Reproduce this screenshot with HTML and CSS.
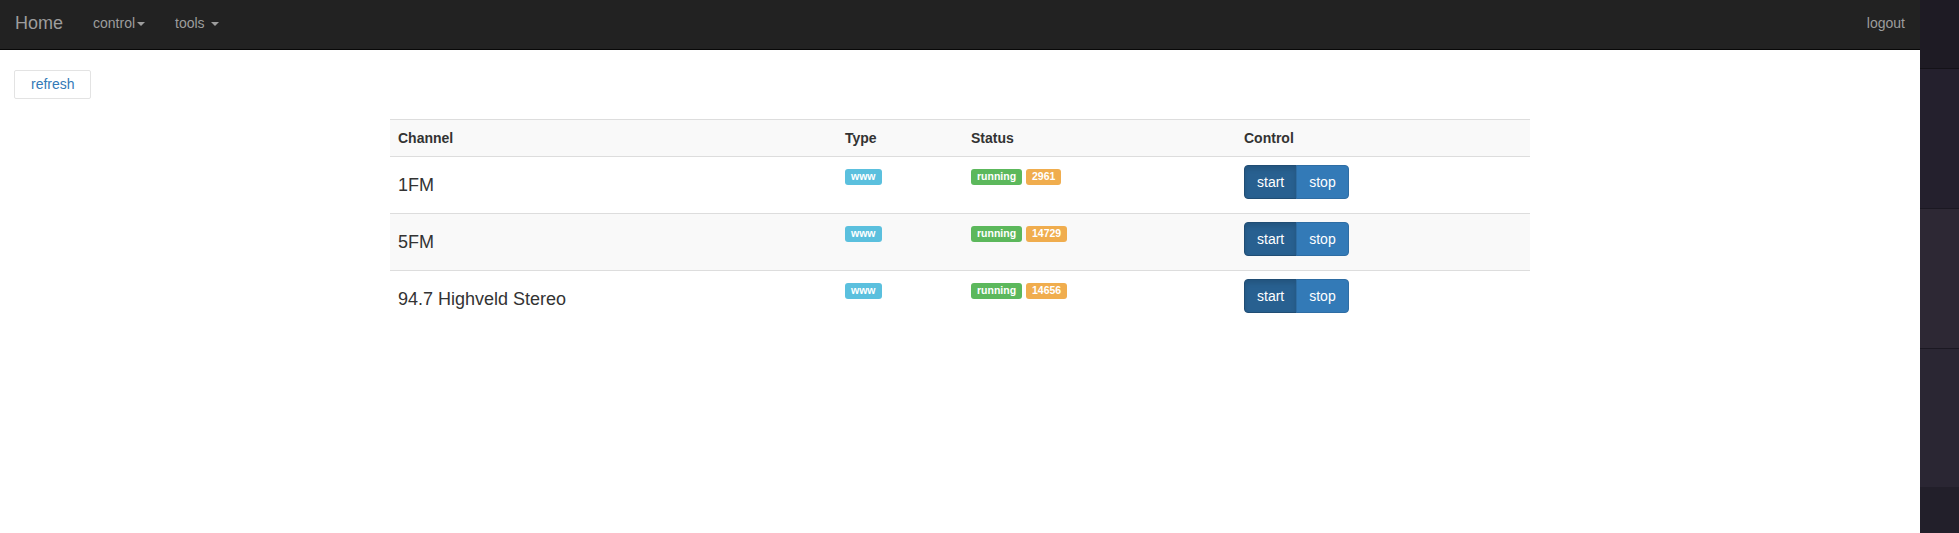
FILE: index.html
```html
<!DOCTYPE html>
<html>
<head>
<meta charset="utf-8">
<title>Channels</title>
<link rel="stylesheet" href="styles.css">
</head>
<body>
<div class="screen">
  <div class="page">
    <nav class="navbar">
      <a class="brand">Home</a>
      <a class="nav-link">control<span class="caret"></span></a>
      <a class="nav-link">tools <span class="caret"></span></a>
      <a class="nav-link nav-right">logout</a>
    </nav>
    <div class="toolbar">
      <button class="btn-refresh">refresh</button>
    </div>
    <div class="container">
      <table class="channels">
        <thead>
          <tr>
            <th class="col-channel">Channel</th>
            <th class="col-type">Type</th>
            <th class="col-status">Status</th>
            <th class="col-control">Control</th>
          </tr>
        </thead>
        <tbody>
          <tr>
            <td><h4 class="channel-name">1FM</h4></td>
            <td><span class="label label-info">www</span></td>
            <td><span class="label label-success">running</span> <span class="label label-warning">2961</span></td>
            <td><div class="btn-group"><button class="btn btn-start">start</button><button class="btn btn-stop">stop</button></div></td>
          </tr>
          <tr>
            <td><h4 class="channel-name">5FM</h4></td>
            <td><span class="label label-info">www</span></td>
            <td><span class="label label-success">running</span> <span class="label label-warning">14729</span></td>
            <td><div class="btn-group"><button class="btn btn-start">start</button><button class="btn btn-stop">stop</button></div></td>
          </tr>
          <tr>
            <td><h4 class="channel-name">94.7 Highveld Stereo</h4></td>
            <td><span class="label label-info">www</span></td>
            <td><span class="label label-success">running</span> <span class="label label-warning">14656</span></td>
            <td><div class="btn-group"><button class="btn btn-start">start</button><button class="btn btn-stop">stop</button></div></td>
          </tr>
        </tbody>
      </table>
    </div>
  </div>
  <div class="side">
    <div class="seg seg-1"></div>
    <div class="seg seg-2"></div>
    <div class="seg seg-3"></div>
    <div class="seg seg-4"></div>
    <div class="seg seg-5"></div>
  </div>
</div>
</body>
</html>
```

FILE: styles.css
```css
html, body {
  margin: 0;
  padding: 0;
}
body {
  font-family: "Liberation Sans", Arial, Helvetica, sans-serif;
  font-size: 14px;
  line-height: 20px;
  color: #333;
  background: #fff;
}
.screen {
  display: flex;
  height: 533px;
  overflow: hidden;
}
.page {
  width: 1920px;
  flex: 0 0 1920px;
  background: #fff;
}
.navbar {
  display: flex;
  align-items: flex-start;
  height: 49px;
  background: #222;
  border-bottom: 1px solid #080808;
}
.brand {
  display: block;
  padding: 13px 15px;
  font-size: 18px;
  line-height: 20px;
  color: #9d9d9d;
}
.nav-link {
  display: block;
  padding: 13px 15px;
  color: #9d9d9d;
  font-size: 14px;
  line-height: 20px;
  white-space: pre;
}
.nav-right {
  margin-left: auto;
}
.caret {
  display: inline-block;
  width: 0;
  height: 0;
  margin-left: 2px;
  border-top: 4px solid #9d9d9d;
  border-left: 4px solid transparent;
  border-right: 4px solid transparent;
  vertical-align: middle;
}
.toolbar {
  padding: 20px 14px 0;
  display: flex;
}
.btn-refresh {
  font-family: inherit;
  font-size: 14px;
  line-height: 19px;
  padding: 4px 15px 4px 16px;
  color: #337ab7;
  background: #fff;
  border: 1px solid #e3e3e3;
  border-radius: 2px;
}
.container {
  width: 1140px;
  margin: 20px auto 0;
}
.channels {
  width: 100%;
  border-collapse: collapse;
  border-spacing: 0;
}
.channels th {
  text-align: left;
  font-weight: bold;
  padding: 8px;
  line-height: 20px;
  border-top: 1px solid #ddd;
  border-bottom: 1px solid #ddd;
  vertical-align: bottom;
}
.channels thead tr {
  background: #f9f9f9;
}
.channels td {
  padding: 8px;
  line-height: 20px;
  vertical-align: top;
  border-top: 1px solid #ddd;
}
.channels tbody tr:nth-child(even) {
  background: #f9f9f9;
}
.col-channel { width: 431px; }
.col-type { width: 110px; }
.col-status { width: 257px; }
.channel-name {
  margin: 10px 0;
  font-size: 18px;
  line-height: 20px;
  font-weight: normal;
}
.label {
  display: inline-block;
  padding: 2px 6px 3px;
  font-size: 10.5px;
  font-weight: bold;
  line-height: 1;
  color: #fff;
  border-radius: 3px;
  vertical-align: baseline;
  white-space: nowrap;
}
.label-info { background: #5bc0de; }
.label-success { background: #5cb85c; }
.label-warning { background: #f0ad4e; }
.btn-group {
  display: inline-flex;
}
.btn {
  font-family: inherit;
  font-size: 14px;
  line-height: 20px;
  padding: 6px 12px;
  color: #fff;
  background: #337ab7;
  border: 1px solid #2e6da4;
}
.btn-start {
  background: #286090;
  border-color: #204d74;
  border-radius: 4px 0 0 4px;
  box-shadow: inset 0 3px 5px rgba(0, 0, 0, 0.125);
}
.btn-stop {
  margin-left: -1px;
  border-radius: 0 4px 4px 0;
}
.side {
  flex: 0 0 39px;
  display: flex;
  flex-direction: column;
  box-shadow: inset 2px 0 2px rgba(0, 0, 0, 0.25);
}
.seg { width: 100%; }
.seg-1 { height: 68px; background: #1e1b24; border-bottom: 1px solid #141218; }
.seg-2 { height: 139px; background: #24202d; border-bottom: 1px solid #1b1822; }
.seg-3 { height: 139px; background: #2d2834; border-bottom: 1px solid #1b1822; }
.seg-4 { height: 138px; background: #2a2633; }
.seg-5 { flex: 1; background: #221f2a; }
```
